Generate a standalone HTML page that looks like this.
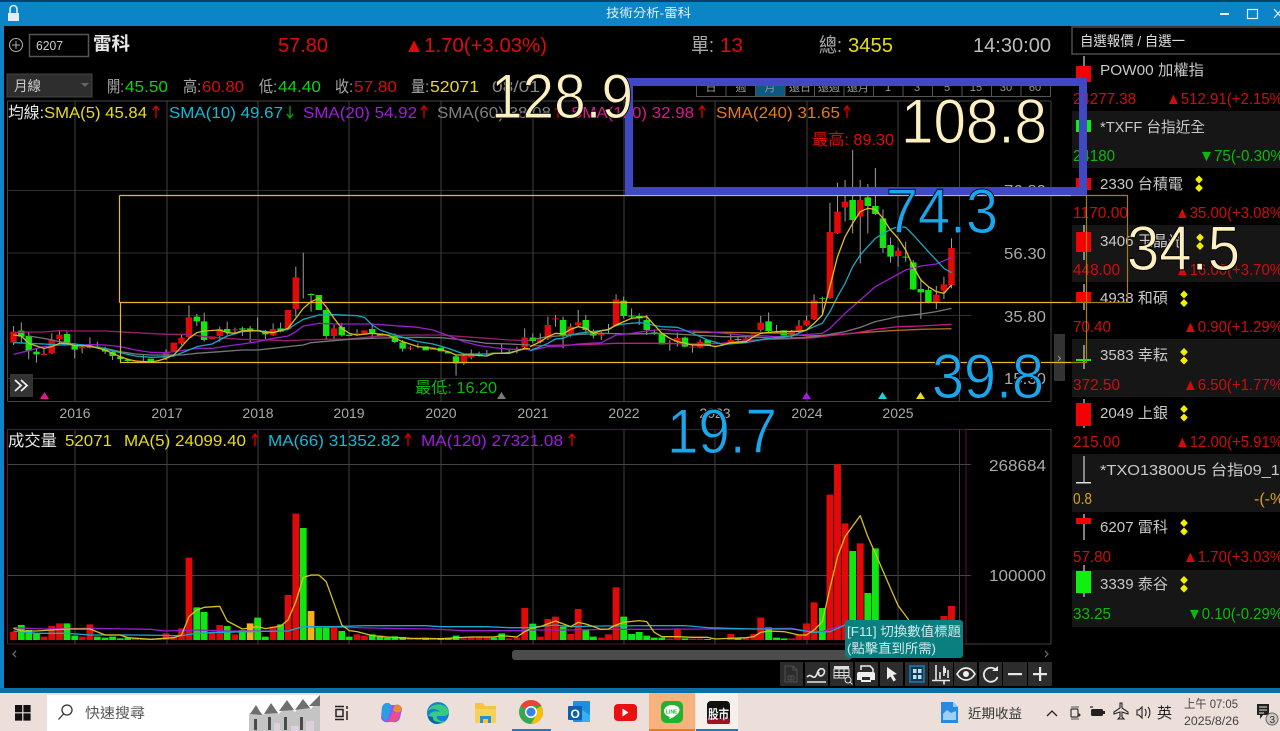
<!DOCTYPE html>
<html lang="zh-Hant"><head><meta charset="utf-8"><title>技術分析-雷科</title>
<style>
html,body{margin:0;padding:0;background:#000;width:1280px;height:731px;overflow:hidden}
svg{display:block;position:absolute;left:0;top:0;filter:blur(.3px)}
text{font-family:"Liberation Sans","Noto Sans CJK TC",sans-serif;font-size:16px;white-space:pre}
.g{fill:#aaa}.r{fill:#e00a0a}.gr{fill:#0fd40f}.y{fill:#e8dc18}.c{fill:#12bcd8}.p{fill:#a31be0}.o{fill:#e87c10}.pk{fill:#e0168c}.w{fill:#e8e8e8}
.r2{fill:#d00c0c}.gr2{fill:#0cb80c}
.n{fill:#c8c8c8;font-size:15px}.v{font-size:16px}
.big{font-size:63px;stroke:#000;stroke-width:.9px;paint-order:normal}
.ln{fill:none;stroke-width:1.3;vector-effect:non-scaling-stroke;stroke-linejoin:round}
.bd{fill:none;stroke-width:19}.bv{fill:none;stroke-width:20}.wk{fill:none;stroke:#9a9a9a;stroke-width:3}
.ic{fill:none;stroke:#e8e8e8;stroke-width:1.6}
</style></head><body>
<svg width="1280" height="731" viewBox="0 0 1280 731" xmlns="http://www.w3.org/2000/svg">
<rect width="1280" height="731" fill="#000"/>
<!-- window chrome -->
<rect width="1280" height="2" fill="#0a3f66"/>
<rect y="2" width="1280" height="24" fill="#0b84c8"/>
<rect y="26" width="4" height="664" fill="#0b84c8"/>
<rect y="688" width="1280" height="5" fill="#0b6fa8"/>
<g fill="#dfeefa"><rect x="8" y="13" width="11" height="8"/><path d="M10 13V9a3.5 3.5 0 0 1 7 0v4" fill="none" stroke="#dfeefa" stroke-width="1.6"/></g>
<text x="606" y="17" font-size="12" fill="#e8f2fa" textLength="85" lengthAdjust="spacingAndGlyphs" style="font-size:12px">技術分析-雷科</text>
<rect x="1220" y="13" width="9" height="2" fill="#e8f2fa"/>
<rect x="1247.500" y="9.500" width="10" height="9" fill="none" stroke="#e8f2fa" stroke-width="1.200"/>
<path d="M1274 9l8 9M1282 9l-8 9" stroke="#e8f2fa" stroke-width="1.200"/>

<!-- header row -->
<circle cx="16" cy="45" r="6.500" fill="none" stroke="#aaa" stroke-width="1.100"/><path d="M12 45h8M16 41v8" stroke="#aaa" stroke-width="1"/>
<rect x="29.500" y="34.500" width="59" height="22" fill="#000" stroke="#555" stroke-width="1.500"/>
<text x="36" y="50" style="font-size:13px" fill="#ccc" textLength="27" lengthAdjust="spacingAndGlyphs">6207</text>
<text x="93" y="50" style="font-size:18px;font-weight:bold" class="w" textLength="37" lengthAdjust="spacingAndGlyphs">雷科</text>
<text x="278" y="52" style="font-size:20px" class="r" textLength="50" lengthAdjust="spacingAndGlyphs">57.80</text>
<text x="404" y="52" style="font-size:20px" class="r" textLength="143" lengthAdjust="spacingAndGlyphs">▲1.70(+3.03%)</text>
<text x="691" y="52" style="font-size:20px" class="g" textLength="23" lengthAdjust="spacingAndGlyphs">單:</text>
<text x="720" y="52" style="font-size:20px" class="r" textLength="23" lengthAdjust="spacingAndGlyphs">13</text>
<text x="819" y="52" style="font-size:20px" class="g" textLength="23" lengthAdjust="spacingAndGlyphs">總:</text>
<text x="848" y="52" style="font-size:20px" class="y" textLength="45" lengthAdjust="spacingAndGlyphs">3455</text>
<text x="973" y="52" style="font-size:20px" fill="#bbb" textLength="78" lengthAdjust="spacingAndGlyphs">14:30:00</text>

<rect x="7" y="74" width="85" height="23" fill="#2e2e2e" stroke="#444"/>
<text x="14" y="91" style="font-size:14px" fill="#ccc" textLength="27" lengthAdjust="spacingAndGlyphs">月線</text>
<path d="M81 83h8l-4 4z" fill="#666"/>
<text x="107" y="92" class="g" textLength="17" lengthAdjust="spacingAndGlyphs">開:</text><text x="125" y="92" class="gr" textLength="43" lengthAdjust="spacingAndGlyphs">45.50</text>
<text x="183" y="92" class="g" textLength="18" lengthAdjust="spacingAndGlyphs">高:</text><text x="202" y="92" class="r" textLength="42" lengthAdjust="spacingAndGlyphs">60.80</text>
<text x="259" y="92" class="g" textLength="18" lengthAdjust="spacingAndGlyphs">低:</text><text x="278" y="92" class="gr" textLength="43" lengthAdjust="spacingAndGlyphs">44.40</text>
<text x="335" y="92" class="g" textLength="18" lengthAdjust="spacingAndGlyphs">收:</text><text x="354" y="92" class="r" textLength="43" lengthAdjust="spacingAndGlyphs">57.80</text>
<text x="411" y="92" class="g" textLength="18" lengthAdjust="spacingAndGlyphs">量:</text><text x="430" y="92" class="y" textLength="49" lengthAdjust="spacingAndGlyphs">52071</text>
<text x="492" y="92" fill="#888" textLength="48" lengthAdjust="spacingAndGlyphs">08/01</text>

<!-- period buttons -->
<rect x="755.500" y="78" width="29.500" height="18" fill="#0b5a80"/>
<path d="M696.500 78.500h354v18h-354zM726 78v18M755.500 78v18M785 78v18M814.500 78v18M844 78v18M873.500 78v18M903 78v18M932.500 78v18M962 78v18M991.500 78v18M1021 78v18" fill="none" stroke="#555"/>
<g fill="#999" style="font-size:11px" text-anchor="middle"><text x="711" y="91" style="font-size:11px">日</text><text x="741" y="91" style="font-size:11px">週</text><text x="770" y="91" style="font-size:11px">月</text><text x="800" y="91" style="font-size:11px">還日</text><text x="829" y="91" style="font-size:11px">還週</text><text x="858" y="91" style="font-size:11px">還月</text><text x="888" y="91" style="font-size:11px">1</text><text x="917" y="91" style="font-size:11px">3</text><text x="947" y="91" style="font-size:11px">5</text><text x="976" y="91" style="font-size:11px">15</text><text x="1006" y="91" style="font-size:11px">30</text><text x="1035" y="91" style="font-size:11px">60</text></g>

<!-- main chart frame and grid -->
<g fill="none">
<path d="M7.500 101H1051M7.500 101V401M7.500 401.500H1051M1051 101V401" stroke="#444"/>
<path d="M7.500 190.500H971M7.500 253H971M7.500 315.500H971M7.500 378.500H971" stroke="#2e2e2e"/>
<path d="M75 101V401M167 101V401M258 101V401M349 101V401M441 101V401M533 101V401M624 101V401M715 101V401M807 101V401M898 101V401M959.500 101V401" stroke="#404040"/>
<!-- volume frame -->
<path d="M7.500 429.500H966V644H7.500Z" stroke="#5a1040"/>
<path d="M966 429.500H1051V644H966M966 429.500V644" stroke="#444"/>
<path d="M966 429V644" stroke="#5a1040"/>
<path d="M7.500 464.500H971M7.500 575.500H971" stroke="#444"/>
<path d="M75 430V644M167 430V644M258 430V644M349 430V644M441 430V644M533 430V644M624 430V644M715 430V644M807 430V644M898 430V644M959.500 430V644" stroke="#404040"/>
</g>

<!-- left section candles -->
<g transform="translate(0,200) scale(.33807,.33333)">
<path class="wk" d="M40 378V435M63 367V430M85 395V478M108 445V488M130 445V466M153 400V462M176 392V432M198 395V437M221 430V475M243 432V460M266 412V445M288 425V445M311 440V462M333 450V480M356 465V480M378 475V487M424 465V485M491 448V480M537 405V435M559 316V415M582 342V378M604 338V425M650 380V425M672 365V405M695 383V398M717 380V408M740 378V430M762 352V395M785 390V418M808 370V408M830 368V397M875 200V350M897 158V295M920 280V335M965 325V420M988 375V415M1011 368V410M1056 388V408M1101 370V415M1168 400V430M1191 420V455M1214 438V450M1236 430V445M1349 465V527M1372 465V495M1394 448V478M1417 455V470M1440 450V468M1484 432V462M1506 445V462M1529 440V460M1552 385V445"/>
<path class="bd" stroke="#e00a0a" d="M40 395V428M130 461V465M153 420V460M176 404V417M243 441V445M401 481V484M491 458V475M514 428V453M537 413V430M559 352V411M627 409V418M650 387V408M695 388V391M808 387V406M852 330V388M875 232V327M988 385V408M1056 400V406M1078 391V401M1214 443V446M1281 442V450M1372 468V490M1394 461V472M1552 413V441"/>
<path class="bd" stroke="#12e612" d="M63 392V410M85 408V452M108 455V463M198 402V435M221 437V449M266 440V443M288 440V443M311 446V455M333 455V468M356 470V477M378 479V483M446 476V486M582 350V364M604 364V420M672 387V397M717 385V389M740 385V391M762 390V393M785 395V403M830 385V395M920 282V285M943 285V330M965 330V408M1011 381V406M1033 404V408M1101 387V400M1124 400V408M1146 403V407M1168 408V426M1191 427V446M1259 439V451M1304 443V454M1326 455V460M1349 469V490M1417 463V466M1461 458V462M1506 456V459"/>
<polyline class="ln" stroke="#9a1e6e" points="40,397 85,396 130,396 176,392 221,393 311,393 401,398 491,403 559,403 604,410 672,415 717,418 785,420 852,422 897,420 965,418 1033,417 1101,410 1168,406 1236,405 1304,405 1372,410 1440,415 1506,420 1568,422"/>
<polyline class="ln" stroke="#777" points="85,408 130,415 176,425 221,432 266,440 311,445 356,455 401,462 446,465 491,465 537,465 582,460 650,455 717,450 762,450 808,445 852,440 897,435 920,428 965,424 1033,418 1101,415 1168,413 1236,412 1304,413 1372,420 1440,430 1506,432 1568,435"/>
<polyline class="ln" stroke="#9a1ed0" points="40,463 85,452 130,440 176,435 221,435 266,434 311,435 356,440 401,450 446,457 491,458 537,452 582,445 627,445 672,438 717,432 762,425 808,415 852,408 875,395 897,378 943,370 988,372 1056,372 1101,372 1168,377 1236,382 1281,390 1326,407 1372,425 1417,437 1461,443 1506,448 1552,448 1568,450"/>
<polyline class="ln" stroke="#18a8c0" points="40,428 85,430 130,432 176,435 221,432 266,438 311,447 356,458 401,468 446,472 491,470 514,468 559,450 582,440 627,432 672,408 717,395 762,392 808,397 852,388 875,372 897,358 943,345 988,344 1056,347 1078,352 1101,375 1124,390 1168,405 1236,425 1281,432 1326,445 1372,462 1440,462 1506,458 1552,447"/>
<polyline class="ln" stroke="#d8b820" points="40,405 63,408 85,430 108,438 130,445 153,440 176,430 198,430 221,437 266,438 311,450 333,460 356,470 378,478 401,483 446,486 469,482 491,475 514,465 537,440 559,415 582,398 604,393 650,390 672,398 695,400 717,392 762,392 785,397 808,398 830,392 852,385 875,355 897,325 920,305 943,295 965,320 988,355 1011,385 1033,400 1056,405 1100,400 1146,405 1168,415 1191,425 1236,440 1281,445 1326,455 1349,465 1394,465 1440,468 1461,460 1506,460 1552,445 1568,447"/>
</g>
<!-- right section candles -->
<g transform="translate(530,170) scale(.34435,.33333)">
<path class="wk" d="M8 490V520M30 490V520M52 440V510M74 435V470M96 440V535M118 460V500M140 420V470M162 435V490M184 478V505M207 485V510M228 462V490M250 373V470M272 380V445M295 415V445M317 430V465M339 435V495M361 480V495M406 510V542M428 488V530M450 500V532M472 522V548M494 508V535M583 485V518M604 500V518M627 495V515M670 438V485M693 427V490M716 465V490M760 480V505M781 450V490M803 437V468M825 373V450M849 380V435M871 98V386M893 38V192M915 30V155M937 -60V190M959 30V280M981 42V190M1003 -6V135M1025 118V248M1047 203V278M1069 233V290M1091 215V275M1113 270V360M1135 325V447M1157 350V400M1180 348V417M1202 320V387M1224 205V355"/>
<path class="bd" stroke="#e00a0a" d="M30 508V516M52 465V505M74 445V448M118 470V495M140 457V465M207 492V496M250 388V468M406 518V522M428 504V516M472 530V533M494 515V533M583 510V516M627 505V512M650 486V494M670 458V480M760 485V493M781 467V483M803 451V466M825 391V447M871 186V384M893 125V190M915 95V112M959 90V140M1069 242V258M1180 374V396M1202 343V362M1224 234V345"/>
<path class="bd" stroke="#12e612" d="M8 503V513M96 450V495M162 450V480M184 483V497M272 392V438M295 437V440M317 438V445M339 450V480M361 487V490M383 492V523M450 503V530M516 510V528M604 507V510M693 454V483M737 481V496M849 384V386M937 90V150M981 82V108M1003 108V132M1025 145V234M1047 225V260M1091 260V263M1113 277V358M1135 357V367M1157 360V397"/>
<polyline class="ln" stroke="#b06a18" points="472,487 560,487 650,488 738,490 803,498 871,495 959,488 1047,482 1135,478 1224,476"/>
<polyline class="ln" stroke="#c8188a" points="0,527 118,525 207,522 250,520 361,520 472,522 560,520 650,510 738,507 825,503 871,497 937,490 1003,478 1069,470 1135,468 1224,463"/>
<polyline class="ln" stroke="#777" points="0,510 52,500 118,495 207,490 295,492 383,490 472,495 560,500 627,500 716,505 803,503 849,497 915,485 959,472 1003,455 1069,440 1135,432 1180,425 1224,415"/>
<polyline class="ln" stroke="#9a1ed0" points="0,542 52,530 96,528 140,522 207,518 250,495 295,490 339,483 383,478 428,482 472,483 516,485 583,492 627,497 670,497 716,500 760,497 825,492 849,490 871,475 915,430 959,390 1003,350 1047,325 1091,300 1135,288 1180,282 1224,262"/>
<polyline class="ln" stroke="#18a8c0" points="0,542 30,530 52,520 74,507 96,505 118,495 140,490 162,487 207,482 228,480 250,465 272,462 295,460 317,458 339,460 361,467 383,470 428,472 472,490 516,510 560,523 627,518 693,505 760,498 803,480 825,470 849,460 871,425 893,380 915,340 937,290 959,255 1003,205 1047,178 1069,170 1091,172 1113,195 1157,245 1202,295 1224,308"/>
<polyline class="ln" stroke="#e0c020" points="0,530 30,515 52,500 74,490 96,492 118,478 140,470 162,475 184,490 207,482 228,478 250,465 272,455 295,445 339,440 361,465 383,490 406,505 428,515 472,525 516,525 538,530 560,525 583,518 627,515 650,500 670,490 716,485 781,484 803,480 825,460 849,435 871,350 893,260 915,200 937,160 959,125 981,115 1003,118 1025,145 1047,180 1069,205 1091,240 1113,290 1135,330 1157,350 1180,365 1202,370 1224,345"/>
</g>
<!-- volume bars left -->
<g transform="translate(0,425) scale(.33807,.33333)">
<path class="bv" stroke="#e00a0a" d="M40 620V645M130 635V645M153 603V645M176 595V645M243 635V645M266 598V645M401 641V645M424 641V645M469 641V645M491 625V645M514 635V645M537 610V645M559 398V645M627 620V645M650 600V645M695 628V645M808 605V645M852 510V645M875 266V645M988 608V645M1056 628V645M1078 632V645M1214 640V645M1236 640V645M1281 640V645M1372 640V645M1394 635V645M1417 635V645M1440 635V645M1506 640V645M1529 638V645M1552 549V645"/>
<path class="bv" stroke="#12e612" d="M63 600V645M85 615V645M108 625V645M198 595V645M221 632V645M288 635V645M311 638V645M333 635V645M356 640V645M378 638V645M446 642V645M582 547V645M604 561V645M672 603V645M717 615V645M762 578V645M785 635V645M830 598V645M897 309V645M943 608V645M965 608V645M1011 618V645M1033 635V645M1101 628V645M1124 632V645M1146 638V645M1168 634V645M1191 636V645M1259 638V645M1304 640V645M1326 640V645M1349 632V645M1461 638V645M1484 625V645"/>
<path class="bv" stroke="#f5b020" d="M740 595V645M920 558V645"/>
<polyline class="ln" stroke="#9a1ed0" points="40,608 130,612 266,610 445,613 490,618 582,615 672,618 762,618 852,618 897,605 1011,607 1146,610 1281,612 1372,617 1568,617"/>
<polyline class="ln" stroke="#18a8d0" points="40,618 108,625 198,625 266,630 401,630 537,632 582,625 650,622 740,620 852,618 897,605 988,605 1078,602 1259,602 1304,605 1440,605 1506,608 1568,608"/>
<polyline class="ln" stroke="#d8c020" points="40,610 63,618 108,618 153,615 198,612 266,612 311,630 356,630 378,638 446,643 514,638 537,630 559,575 582,555 604,547 650,544 672,588 717,612 762,605 785,611 830,603 852,585 875,530 897,458 920,450 943,450 965,470 988,535 1011,600 1033,617 1056,620 1101,632 1146,636 1214,640 1304,641 1394,636 1461,636 1484,632 1529,636 1552,620 1568,612"/>
</g>
<!-- volume bars right -->
<g transform="translate(530,425) scale(.34435,.33333)">
<path class="bv" stroke="#e00a0a" d="M30 635V645M52 582V645M74 575V645M118 627V645M140 552V645M207 638V645M228 628V645M250 487V645M406 641V645M428 610V645M472 641V645M494 641V645M583 627V645M627 638V645M650 627V645M670 578V645M760 640V645M781 628V645M803 595V645M825 532V645M871 209V645M893 118V645M915 295V645M959 355V645M1202 573V645M1224 543V645"/>
<path class="bv" stroke="#12e612" d="M8 596V645M96 605V645M162 615V645M184 635V645M272 575V645M295 627V645M317 621V645M339 632V645M361 638V645M383 638V645M450 640V645M516 642V645M604 638V645M693 607V645M716 638V645M738 640V645M849 549V645M937 378V645M981 504V645M1003 370V645"/>
<polyline class="ln" stroke="#9a1ed0" points="0,615 120,615 250,613 360,613 500,612 640,612 760,610 803,618 849,620 871,612 915,600"/>
<polyline class="ln" stroke="#18a8d0" points="0,607 74,600 118,605 207,603 340,602 450,602 516,608 650,612 760,612 825,622 871,620 915,600"/>
<polyline class="ln" stroke="#d8c020" points="0,610 30,605 74,588 118,605 140,592 162,597 207,613 228,612 250,600 272,592 317,587 339,590 361,622 383,635 428,635 472,637 516,637 538,642 627,638 650,635 670,622 693,618 738,620 781,630 803,630 825,615 849,590 871,490 893,395 915,335 959,272 981,335 1003,385 1047,490 1069,542 1100,585"/>
</g>

<!-- legend -->
<text x="8" y="118" class="w" textLength="36" lengthAdjust="spacingAndGlyphs">均線:</text>
<text x="44" y="118" class="y" textLength="103" lengthAdjust="spacingAndGlyphs">SMA(5) 45.84</text><path d="M156 106v12M153 110l3-4 3 4" stroke="#d00" fill="none" stroke-width="1.300"/>
<text x="169" y="118" class="c" textLength="114" lengthAdjust="spacingAndGlyphs">SMA(10) 49.67</text><path d="M290 106v12M287 114l3 4 3-4" stroke="#0a0" fill="none" stroke-width="1.300"/>
<text x="303" y="118" class="p" textLength="114" lengthAdjust="spacingAndGlyphs">SMA(20) 54.92</text><path d="M424 106v12M421 110l3-4 3 4" stroke="#d00" fill="none" stroke-width="1.300"/>
<text x="437" y="118" fill="#808080" textLength="114" lengthAdjust="spacingAndGlyphs">SMA(60) 38.08</text><path d="M558 106v12M555 110l3-4 3 4" stroke="#d00" fill="none" stroke-width="1.300"/>
<text x="571" y="118" class="pk" textLength="123" lengthAdjust="spacingAndGlyphs">SMA(120) 32.98</text><path d="M702 106v12M699 110l3-4 3 4" stroke="#d00" fill="none" stroke-width="1.300"/>
<text x="716" y="118" class="o" textLength="124" lengthAdjust="spacingAndGlyphs">SMA(240) 31.65</text><path d="M847 106v12M844 110l3-4 3 4" stroke="#d00" fill="none" stroke-width="1.300"/>
<text x="812" y="145" class="r" textLength="82" lengthAdjust="spacingAndGlyphs">最高: 89.30</text>
<text x="415" y="393" fill="#0cb80c" textLength="82" lengthAdjust="spacingAndGlyphs">最低: 16.20</text>
<g fill="#aaa"><text x="1004" y="196" textLength="42" lengthAdjust="spacingAndGlyphs">76.80</text><text x="1004" y="259" textLength="42" lengthAdjust="spacingAndGlyphs">56.30</text><text x="1004" y="322" textLength="42" lengthAdjust="spacingAndGlyphs">35.80</text><text x="1004" y="384" textLength="42" lengthAdjust="spacingAndGlyphs">15.30</text></g>
<g fill="#aaa" text-anchor="middle" style="font-size:14px">
<text x="75" y="418" style="font-size:14px">2016</text><text x="167" y="418" style="font-size:14px">2017</text><text x="258" y="418" style="font-size:14px">2018</text><text x="349" y="418" style="font-size:14px">2019</text><text x="441" y="418" style="font-size:14px">2020</text><text x="533" y="418" style="font-size:14px">2021</text><text x="624" y="418" style="font-size:14px">2022</text><text x="715" y="418" style="font-size:14px">2023</text><text x="807" y="418" style="font-size:14px">2024</text><text x="898" y="418" style="font-size:14px">2025</text></g>
<path d="M40 399l4.500-7 4.500 7z" fill="#e0168c"/><path d="M497 399l4.500-7 4.500 7z" fill="#777"/><path d="M802 399l4.500-7 4.500 7z" fill="#a31be0"/><path d="M878 399l4.500-7 4.500 7z" fill="#18d0e0"/><path d="M916 399l4.500-7 4.500 7z" fill="#ecdc18"/>
<rect x="10" y="374" width="23" height="23" fill="#333"/><path d="M15 380l6 5.500-6 5.500M21 380l6 5.500-6 5.500" fill="none" stroke="#eee" stroke-width="1.800"/>
<rect x="1054" y="334" width="11" height="47" fill="#333"/><path d="M1058 356l2.500 2.500-2.500 2.500" fill="none" stroke="#999"/>

<!-- volume legend -->
<text x="8" y="446" class="w" textLength="49" lengthAdjust="spacingAndGlyphs">成交量</text>
<text x="65" y="446" class="y" textLength="47" lengthAdjust="spacingAndGlyphs">52071</text>
<text x="124" y="446" class="y" textLength="122" lengthAdjust="spacingAndGlyphs">MA(5) 24099.40</text><path d="M255 434v12M252 438l3-4 3 4" stroke="#d00" fill="none" stroke-width="1.300"/>
<text x="268" y="446" class="c" textLength="132" lengthAdjust="spacingAndGlyphs">MA(66) 31352.82</text><path d="M408 434v12M405 438l3-4 3 4" stroke="#d00" fill="none" stroke-width="1.300"/>
<text x="421" y="446" class="p" textLength="142" lengthAdjust="spacingAndGlyphs">MA(120) 27321.08</text><path d="M572 434v12M569 438l3-4 3 4" stroke="#d00" fill="none" stroke-width="1.300"/>
<text x="989" y="471" fill="#aaa" textLength="57" lengthAdjust="spacingAndGlyphs">268684</text>
<text x="989" y="581" fill="#aaa" textLength="57" lengthAdjust="spacingAndGlyphs">100000</text>

<!-- scrollbar -->
<rect x="512" y="650" width="340" height="10" rx="3" fill="#4c4c4c"/>
<path d="M16 651l-3 3 3 3" stroke="#666" fill="none" stroke-width="1.300"/><path d="M1045 651l3 3-3 3" stroke="#666" fill="none" stroke-width="1.300"/>

<!-- tooltip -->
<rect x="845" y="620" width="118" height="38" rx="3" fill="#0a7f80"/>
<text x="847" y="636" style="font-size:13px" fill="#cfeaea" textLength="114" lengthAdjust="spacingAndGlyphs">[F11] 切換數值標題</text>
<text x="847" y="653" style="font-size:13px" fill="#cfeaea" textLength="89" lengthAdjust="spacingAndGlyphs">(點擊直到所需)</text>

<!-- toolbar -->
<g fill="#2c2c2c"><rect x="780" y="662" width="23" height="24"/><rect x="805" y="662" width="23" height="24"/><rect x="830" y="662" width="23" height="24"/><rect x="855" y="662" width="23" height="24"/><rect x="880" y="662" width="23" height="24"/><rect x="905" y="662" width="23" height="24"/><rect x="929" y="662" width="24" height="24"/><rect x="954" y="662" width="23" height="24"/><rect x="979" y="662" width="23" height="24"/><rect x="1003" y="662" width="24" height="24"/><rect x="1028" y="662" width="24" height="24"/></g>
<path d="M785 666h8l4 4v12h-12zM793 666v4h4M788 676h6v4h-6zM791 676v4" fill="none" stroke="#505050"/>
<path class="ic" d="M807 677c3-3 4-1 6 0s3-1 4-3c1-4 3-6 6-5 3 2 1 6-2 7-2 0-3-2-2-4M807 682h19"/>
<g fill="#ddd"><rect x="834" y="666" width="15" height="3"/></g><path d="M834 669h15v9h-15zM839 669v9M844 669v9M834 672.500h15M834 675.500h15" fill="none" stroke="#ddd"/><circle cx="848" cy="680" r="3" fill="#2c2c2c" stroke="#ddd"/><path d="M850 682l2.500 2.500" stroke="#ddd"/>
<path d="M861 670v-4h9l3 3v3" fill="none" stroke="#eee" stroke-width="1.500"/><path d="M859 672h14a2 2 0 0 1 2 2v6h-4v2h-10v-2h-4v-6a2 2 0 0 1 2-2z" fill="#eee"/><rect x="862" y="677" width="8" height="3" fill="#2c2c2c"/>
<path d="M887 667l10 7-4 1 3 5-2.500 1.500-3-5-3.500 3z" fill="#eee"/>
<rect x="910" y="666" width="14" height="16" fill="#123a56" stroke="#1a78b0" stroke-width="1.600"/><path d="M913 669h3.500v4h-3.500zM918 669h3.500v4h-3.500zM913 675h3.500v4h-3.500zM918 675h3.500v4h-3.500z" fill="#bfe0f0"/>
<path d="M936 680V665M932 680.500h18M944 680.500v4" class="ic"/><path d="M940 672v7M944 666v10M948 670v8" stroke="#e8e8e8" stroke-width="1.600"/><rect x="943" y="668" width="3" height="5" fill="#e8e8e8"/>
<path d="M957 674c3-5 6-6 9-6s6 1 9 6c-3 5-6 6-9 6s-6-1-9-6z" fill="none" stroke="#eee" stroke-width="1.700"/><circle cx="966" cy="674" r="3" fill="#eee"/>
<path d="M996 670a7 7 0 1 0 1.500 7" fill="none" stroke="#e8e8e8" stroke-width="1.800"/><path d="M992 671h6v-5z" fill="#e8e8e8"/>
<rect x="1008" y="673" width="14" height="2.200" fill="#e8e8e8"/><rect x="1033" y="673" width="14" height="2.200" fill="#e8e8e8"/><rect x="1039" y="667" width="2.200" height="14" fill="#e8e8e8"/>

<!-- right panel -->
<rect x="1071" y="26" width="209" height="662" fill="#000"/>
<rect x="1072" y="27" width="210" height="27" fill="#000" stroke="#4a4a4a" stroke-width="1.500"/>
<text x="1080" y="46" style="font-size:14px" fill="#ddd" textLength="105" lengthAdjust="spacingAndGlyphs">自選報價 / 自選一</text>
<g fill="#161616"><rect x="1072" y="111" width="208" height="57"/><rect x="1072" y="225" width="208" height="57"/><rect x="1072" y="339" width="208" height="58"/><rect x="1072" y="454" width="208" height="58"/><rect x="1072" y="570" width="208" height="57"/></g>
<g fill="none" stroke="#aaa" stroke-width="1.500"><path d="M1084 56V85M1084 225V260M1084 284V310M1084 345V369M1084 399V428M1084 456V483M1084 514V540M1084 565V597M1084 170V190"/></g>
<g fill="#f40000"><rect x="1076" y="66" width="15" height="16"/><rect x="1076" y="178" width="15" height="12"/><rect x="1076" y="232" width="15" height="20"/><rect x="1076" y="292" width="15" height="10"/><rect x="1076" y="403" width="15" height="23"/><rect x="1076" y="518" width="15" height="6"/></g>
<g fill="#10f010"><rect x="1076" y="120" width="15" height="12"/><rect x="1076" y="359" width="15" height="2"/><rect x="1076" y="571" width="15" height="22"/></g>
<rect x="1076" y="482" width="15" height="1.500" fill="#ddd"/>
<text x="1100" y="75" class="n" textLength="104" lengthAdjust="spacingAndGlyphs">POW00 加權指</text>
<text x="1100" y="132" class="n" textLength="105" lengthAdjust="spacingAndGlyphs">*TXFF 台指近全</text>
<text x="1100" y="189" class="n" textLength="83" lengthAdjust="spacingAndGlyphs">2330 台積電</text>
<text x="1100" y="246" class="n" textLength="83" lengthAdjust="spacingAndGlyphs">3406 玉晶光</text>
<text x="1100" y="303" class="n" textLength="68" lengthAdjust="spacingAndGlyphs">4938 和碩</text>
<text x="1100" y="360" class="n" textLength="68" lengthAdjust="spacingAndGlyphs">3583 幸耘</text>
<text x="1100" y="418" class="n" textLength="68" lengthAdjust="spacingAndGlyphs">2049 上銀</text>
<text x="1100" y="475" class="n" textLength="198" lengthAdjust="spacingAndGlyphs">*TXO13800U5 台指09_138</text>
<text x="1100" y="532" class="n" textLength="68" lengthAdjust="spacingAndGlyphs">6207 雷科</text>
<text x="1100" y="589" class="n" textLength="68" lengthAdjust="spacingAndGlyphs">3339 泰谷</text>
<g fill="#f2ee00">
<path d="M1199 175.500l3.500 3.500v1l-3.500 3.500-3.500-3.500v-1zM1199 184l3.500 3.500v1l-3.500 3.500-3.500-3.500v-1z"/>
<path transform="translate(1,58)" d="M1199 175.500l3.500 3.500v1l-3.500 3.500-3.500-3.500v-1zM1199 184l3.500 3.500v1l-3.500 3.500-3.500-3.500v-1z"/>
<path transform="translate(-15,115)" d="M1199 175.500l3.500 3.500v1l-3.500 3.500-3.500-3.500v-1zM1199 184l3.500 3.500v1l-3.500 3.500-3.500-3.500v-1z"/>
<path transform="translate(-15,172.500)" d="M1199 175.500l3.500 3.500v1l-3.500 3.500-3.500-3.500v-1zM1199 184l3.500 3.500v1l-3.500 3.500-3.500-3.500v-1z"/>
<path transform="translate(-15,229.500)" d="M1199 175.500l3.500 3.500v1l-3.500 3.500-3.500-3.500v-1zM1199 184l3.500 3.500v1l-3.500 3.500-3.500-3.500v-1z"/>
<path transform="translate(-15,343.500)" d="M1199 175.500l3.500 3.500v1l-3.500 3.500-3.500-3.500v-1zM1199 184l3.500 3.500v1l-3.500 3.500-3.500-3.500v-1z"/>
<path transform="translate(-15,400.500)" d="M1199 175.500l3.500 3.500v1l-3.500 3.500-3.500-3.500v-1zM1199 184l3.500 3.500v1l-3.500 3.500-3.500-3.500v-1z"/>
</g>
<g class="v">
<text x="1073" y="104" class="r2" textLength="63" lengthAdjust="spacingAndGlyphs">24277.38</text>
<text x="1166" y="104" class="r2" textLength="122" lengthAdjust="spacingAndGlyphs">▲512.91(+2.15%)</text>
<text x="1073" y="161" class="gr2" textLength="42" lengthAdjust="spacingAndGlyphs">24180</text>
<text x="1199" y="161" class="gr2" textLength="90" lengthAdjust="spacingAndGlyphs">▼75(-0.30%)</text>
<text x="1073" y="218" class="r2" textLength="55" lengthAdjust="spacingAndGlyphs">1170.00</text>
<text x="1175" y="218" class="r2" textLength="113" lengthAdjust="spacingAndGlyphs">▲35.00(+3.08%)</text>
<text x="1073" y="275" class="r2" textLength="47" lengthAdjust="spacingAndGlyphs">448.00</text>
<text x="1175" y="275" class="r2" textLength="113" lengthAdjust="spacingAndGlyphs">▲16.00(+3.70%)</text>
<text x="1073" y="332" class="r2" textLength="38" lengthAdjust="spacingAndGlyphs">70.40</text>
<text x="1183" y="332" class="r2" textLength="105" lengthAdjust="spacingAndGlyphs">▲0.90(+1.29%)</text>
<text x="1073" y="390" class="r2" textLength="47" lengthAdjust="spacingAndGlyphs">372.50</text>
<text x="1183" y="390" class="r2" textLength="105" lengthAdjust="spacingAndGlyphs">▲6.50(+1.77%)</text>
<text x="1073" y="447" class="r2" textLength="47" lengthAdjust="spacingAndGlyphs">215.00</text>
<text x="1175" y="447" class="r2" textLength="113" lengthAdjust="spacingAndGlyphs">▲12.00(+5.91%)</text>
<text x="1073" y="504" fill="#d8a020" textLength="19" lengthAdjust="spacingAndGlyphs">0.8</text>
<text x="1254" y="504" fill="#d8a020">-(-%)</text>
<text x="1073" y="562" class="r2" textLength="38" lengthAdjust="spacingAndGlyphs">57.80</text>
<text x="1183" y="562" class="r2" textLength="105" lengthAdjust="spacingAndGlyphs">▲1.70(+3.03%)</text>
<text x="1073" y="619" class="gr2" textLength="38" lengthAdjust="spacingAndGlyphs">33.25</text>
<text x="1187" y="619" class="gr2" textLength="101" lengthAdjust="spacingAndGlyphs">▼0.10(-0.29%)</text>
</g>

<!-- drawn annotation rectangles -->
<path d="M119.500 195.500H1071M119.500 195.500V302.500M119.500 302.500H1071M120.500 302V362.500H1071" fill="none" stroke="#e8b828" stroke-width="1.200"/>
<path d="M1071 195.500H1127.500V302.500H1071M1071 362.500H1086.500V195" fill="none" stroke="#a47e1c" stroke-width="1.200"/>
<rect x="629" y="82" width="454" height="109" fill="none" stroke="#4048c4" stroke-width="8"/>

<!-- big labels -->
<g style="font-size:63px">
<text x="491" y="118" class="big" fill="#fdf0c0" textLength="142" lengthAdjust="spacingAndGlyphs">128.9</text>
<text x="901" y="143" class="big" fill="#fdf0c0" textLength="146" lengthAdjust="spacingAndGlyphs">108.8</text>
<text x="886" y="233" class="big" fill="#19a6ea" textLength="112" lengthAdjust="spacingAndGlyphs">74.3</text>
<text x="1127" y="270" class="big" fill="#fdf0c0" textLength="113" lengthAdjust="spacingAndGlyphs">34.5</text>
<text x="932" y="398" class="big" fill="#19a6ea" textLength="112" lengthAdjust="spacingAndGlyphs">39.8</text>
<text x="667" y="453" class="big" fill="#19a6ea" textLength="110" lengthAdjust="spacingAndGlyphs">19.7</text>
</g>

<!-- taskbar -->
<rect y="693" width="1280" height="38" fill="#ecdfd9"/>
<path d="M15 705h7.200v7.200h-7.200zM23.400 705h7.200v7.200h-7.200zM15 713.400h7.200v7.200h-7.200zM23.400 713.400h7.200v7.200h-7.200z" fill="#111"/>
<rect x="47" y="695" width="273" height="36" fill="#fff"/>
<circle cx="67" cy="710" r="5" fill="none" stroke="#333" stroke-width="1.300"/><path d="M63.500 714l-5 5.500" stroke="#333" stroke-width="1.300"/>
<text x="85" y="718" style="font-size:14px" fill="#555" textLength="60" lengthAdjust="spacingAndGlyphs">快速搜尋</text>
<!-- trulli image -->
<g>
<path d="M249 731V714l7-6 8 7 7-8 8 7 8-9 8 7 8-10 8 7 9-11v33z" fill="#c4c4c4"/>
<path d="M250 714l6-9 6 10zM264 714l7-11 7 10zM279 711l8-11 7 10zM295 710l8-11 7 9zM309 706l11-11v11z" fill="#6f6f6f"/>
<path d="M254 719h3v11h-3zM268 717h3v13h-3zM284 717h3v13h-3zM300 717h3v13h-3z" fill="#4a4a4a"/>
<path d="M274 723h6v8h-6zM291 726h8v5h-8zM306 721h8v10h-8z" fill="#dcd0dc"/>
</g>
<!-- task view -->
<path d="M335 706.500h9M335 719.500h9M336 709.500h7v7h-7zM347 706v3M347 711v9" fill="none" stroke="#222" stroke-width="1.500"/>
<!-- copilot -->
<path d="M382 707c2-5 7-5 9-2l4 0c3-1 6 0 7 4l-2 9c-1 3-4 5-7 4l-4 0c-4 1-7-1-8-4z" fill="#8a5cf0"/>
<path d="M382 707c2-5 7-5 9-2l-3 14c-3 2-5 0-6-3z" fill="#2aa0e0"/><path d="M395 705c3-1 6 0 7 4l-2 3c-2 1-6 0-7-2z" fill="#f08a30"/><path d="M393 712l7 1c0 5-3 9-7 9h-5z" fill="#f04a90"/>
<!-- edge -->
<circle cx="438" cy="713" r="11" fill="#1580d0"/><path d="M428 711c2-8 18-10 21 1 0 3-3 4-6 4h-6c-1 3 3 6 8 5-5 5-15 3-17-3 1-6 7-8 12-6-3-4-9-4-12-1z" fill="#35cc80"/><path d="M433 717c-1 3 3 6 9 5l-5 2c-5 0-9-4-9-8z" fill="#0d5fb0"/>
<!-- folder -->
<path d="M475 703h8l2 3h11v17h-21z" fill="#f6c343"/><path d="M475 709h21v14h-5v-7h-11v7h-5z" fill="#f6d25c"/><path d="M480 716h11v7h-3v-4h-5v4h-3z" fill="#2a8fd0"/>
<!-- chrome -->
<circle cx="531" cy="712" r="12" fill="#34a853"/>
<path d="M531 700a12 12 0 0 1 10.400 6H531a6 6 0 0 0-5.200 3l-5.200-3A12 12 0 0 1 531 700z" fill="#ea4335"/>
<path d="M541.400 706A12 12 0 0 1 531 724l5.200-9a6 6 0 0 0 0-6z" fill="#fbbc04"/>
<circle cx="531" cy="712" r="6" fill="#fff"/><circle cx="531" cy="712" r="4.500" fill="#3a7ee8"/>
<rect x="512" y="729" width="39" height="2" fill="#1a78d0"/>
<!-- outlook -->
<rect x="573" y="701" width="17" height="21" rx="1" fill="#1d8fe0"/><rect x="568" y="706" width="14" height="14" rx="1" fill="#0d5faf"/><text x="570.500" y="718" style="font-size:12px;font-weight:bold" fill="#fff">O</text><path d="M582 710l8 5v7h-8z" fill="#38b0f0"/>
<!-- youtube -->
<rect x="614" y="704" width="23" height="17" rx="4" fill="#e81010"/><path d="M622.500 708.500l6 4-6 4z" fill="#fff"/>
<!-- line -->
<rect x="649" y="693" width="46" height="36" fill="#f8b27e"/><rect x="649" y="729" width="46" height="2" fill="#e87a20"/>
<rect x="661" y="701" width="22" height="22" rx="5" fill="#23b22e"/><path d="M672 705c-5 0-8 3-8 6 0 3 3 5 6 6l-1 2c4-1 8-4 10-7 2-4-2-7-7-7z" fill="#fff"/><text x="666" y="713.500" style="font-size:5px;font-weight:bold" fill="#23b22e">LINE</text>
<!-- stock app -->
<rect x="696" y="693" width="42" height="36" fill="#f6f0ec"/><rect x="696" y="729" width="42" height="2" fill="#1a78d0"/>
<rect x="707" y="701" width="23" height="23" rx="4" fill="#111"/><rect x="707" y="718" width="23" height="6" rx="2" fill="#a01020"/><text x="708" y="719" style="font-size:13px;font-weight:bold" fill="#eee" textLength="21" lengthAdjust="spacingAndGlyphs">股市</text>
<!-- tray -->
<path d="M941 702h12l5 5v16h-17z" fill="#2a8ae0"/><path d="M953 702l5 5h-5z" fill="#8cc8f4"/><path d="M943 714l4-4 4 3 5-2v9h-13z" fill="#9cd0f4"/>
<text x="968" y="718" style="font-size:13px" fill="#333" textLength="54" lengthAdjust="spacingAndGlyphs">近期收益</text>
<path d="M1047 716l5-5 5 5" fill="none" stroke="#222" stroke-width="1.300"/>
<path d="M1071 707h8M1071 719h8" stroke="#555"/><rect x="1071" y="709" width="7" height="8" rx="1" fill="none" stroke="#333" stroke-width="1.200"/><circle cx="1079" cy="715" r="1.500" fill="#333"/>
<rect x="1091" y="709" width="12" height="7" rx="1.500" fill="#222"/><path d="M1090 707h3" stroke="#222" stroke-width="1.200"/><rect x="1103" y="711" width="2" height="3" fill="#222"/>
<path d="M1120 703v5l-6 4v2l6-2v5l-2 2h6l-2-2v-5l6 2v-2l-6-4v-5z" fill="none" stroke="#222" stroke-width="1.100"/>
<path d="M1137 710h2l3-3v11l-3-3h-2zM1145 709c1.500 2 1.500 5 0 7M1148 707c2.500 3 2.500 8 0 11" fill="none" stroke="#222" stroke-width="1.100"/>
<text x="1157" y="718" style="font-size:15px" fill="#222">英</text>
<text x="1184" y="708" style="font-size:12px" fill="#444" textLength="54" lengthAdjust="spacingAndGlyphs">上午 07:05</text>
<text x="1184" y="725" style="font-size:12px" fill="#444" textLength="55" lengthAdjust="spacingAndGlyphs">2025/8/26</text>
<path d="M1257 704h12v11h-6l-3 4v-4h-3z" fill="#222"/><path d="M1259 707h8M1259 710h8M1259 713h5" stroke="#ecdfd9"/>
<circle cx="1272" cy="719" r="6" fill="#cfc8c4" stroke="#666"/><text x="1269.500" y="723" style="font-size:10px" fill="#333">3</text>
</svg>
</body></html>
